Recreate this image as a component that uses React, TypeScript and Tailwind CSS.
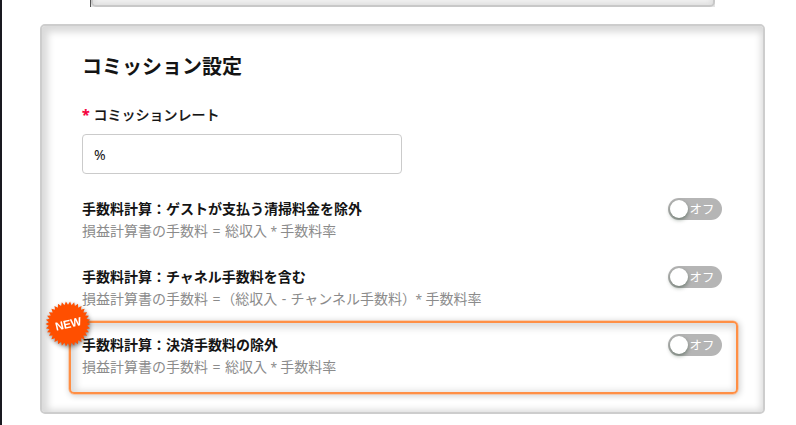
const rows = [
  { title: '手数料計算：ゲストが支払う清掃料金を除外', note: '損益計算書の手数料 = 総収入 * 手数料率' },
  { title: '手数料計算：チャネル手数料を含む', note: '損益計算書の手数料 =（総収入 - チャンネル手数料）* 手数料率' },
  { title: '手数料計算：決済手数料の除外', note: '損益計算書の手数料 = 総収入 * 手数料率' },
];

const operatorWidth: Record<string, string> = {
  '=': 'w-[9.6px]',
  '*': 'w-[5.8px] text-[12px]',
  '-': 'w-[5.6px]',
};

// Serrated outline of the badge, alternating between two radii.
const teeth = 34;
const starPoints = Array.from({ length: teeth * 2 }, (_, i) => {
  const radius = i % 2 === 0 ? 22.5 : 19.2;
  const angle = (i * Math.PI) / teeth;
  return `${(24 + radius * Math.cos(angle)).toFixed(2)},${(24 + radius * Math.sin(angle)).toFixed(2)}`;
}).join(' ');

function Formula({ text }: { text: string }) {
  return (
    <div className="text-[#8b8b8b] [word-spacing:0.1px]">
      {text.split(/([=*-])/).map((part, i) =>
        operatorWidth[part] ? (
          <span key={i} className={`inline-flex justify-center leading-none ${operatorWidth[part]}`}>{part}</span>
        ) : (
          part
        ),
      )}
    </div>
  );
}

function Toggle() {
  return (
    <div className="flex h-[22px] w-[54px] shrink-0 items-center rounded-full bg-[#b5b5b5] pl-[2px]">
      <span className="size-[18px] rounded-full bg-white shadow-[0_2px_4px_0_rgba(0,35,11,0.4)]" />
      <span className="ml-[1.5px] pt-[2px] text-[12.5px] leading-[20px] text-white">オフ</span>
    </div>
  );
}

function NewBadge() {
  return (
    <svg className="absolute top-[-23px] left-[-27px] size-12 overflow-visible drop-shadow-[1px_2px_2px_rgba(0,0,0,0.45)]" viewBox="0 0 48 48">
      <polygon points={starPoints} fill="#ff4f00" />
      <text x="24.3" y="28" transform="rotate(-13 24 24)" textAnchor="middle" fill="#fff" fontSize="11.5" fontWeight="700" fontFamily="Liberation Sans, sans-serif" textLength="26.5">NEW</text>
    </svg>
  );
}

export default function App() {
  return (
    <div className="h-[425px] w-[796px] overflow-hidden border-l-2 border-[#191920] bg-white font-['Noto_Sans','Noto_Sans_CJK_JP',sans-serif] text-[#141414]">
      <div className="ml-[88px] h-[7px] w-[625px] overflow-hidden border-l border-[#555] bg-[#e4e4e4]">
        <div className="-mt-5 h-[27px] rounded-[5px] border-2 border-[#c8c8c8] bg-[#f1f1f1] shadow-[inset_0_0_5px_2px_#dedede]" />
      </div>
      <main className="relative mt-[17px] ml-[38px] h-[390px] w-[725px] rounded-[5px] border-2 border-[#cdcdcd] px-10 pt-[26px] shadow-[inset_2px_2px_7px_4px_#dadada]">
        <h1 className="text-[20px] leading-[30px] font-bold">コミッション設定</h1>
        <div className="mt-[22px] text-[14px] leading-[22px] font-medium [-webkit-text-stroke:0.2px_currentColor]">
          <span className="mr-[4px] font-bold text-[#f5003d]">*</span>コミッションレート
        </div>
        <div className="mt-2 flex h-10 w-80 items-center rounded-[4px] border border-[#cbcbcb] bg-white px-[11px] text-[14px]">%</div>
        <div className="mt-6 flex flex-col gap-6">
          {rows.map((row) => (
            <div key={row.title} className="flex h-11 w-[640px] justify-between">
              <div className="text-[14px] leading-[22px] whitespace-nowrap">
                <div className="font-bold">{row.title}</div>
                <Formula text={row.note} />
              </div>
              <Toggle />
            </div>
          ))}
        </div>
        <div className="absolute top-[295px] left-[27px] h-[73px] w-[669px] rounded-[5px] border-2 border-[#ff8f45] shadow-[inset_2px_2px_7px_3px_rgba(0,0,0,0.14),0_0_0_0.5px_#ffb27f,1px_1px_6px_1px_rgba(0,0,0,0.18)]">
          <NewBadge />
        </div>
      </main>
    </div>
  );
}
